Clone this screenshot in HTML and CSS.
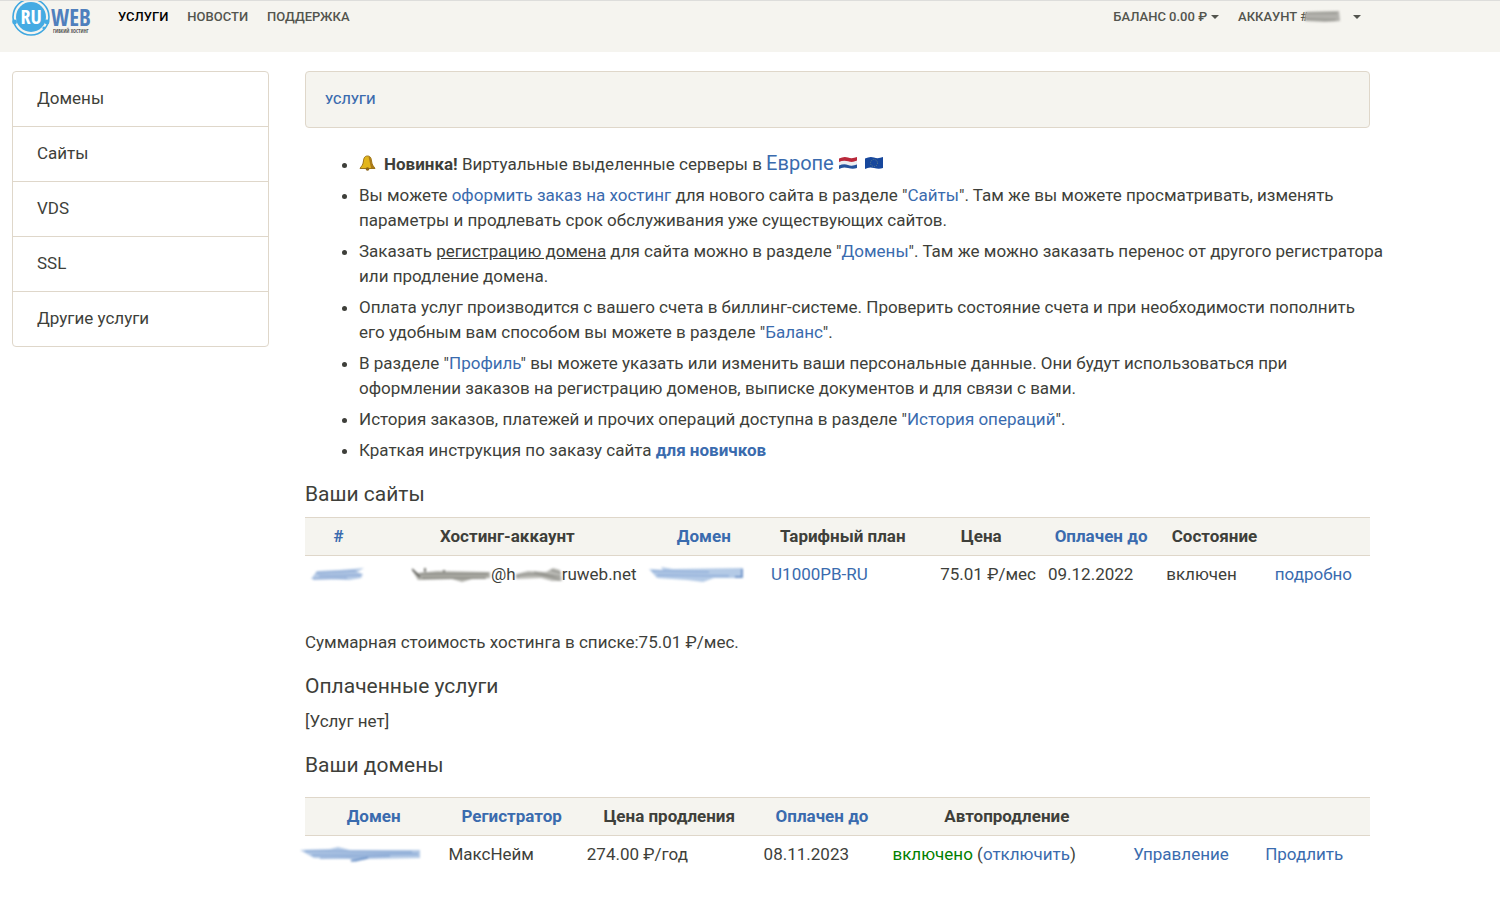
FILE: index.html
```html
<!DOCTYPE html>
<html lang="ru">
<head>
<meta charset="utf-8">
<title>RuWeb — Услуги</title>
<link rel="stylesheet" href="styles.css">
</head>
<body>
<header class="topbar">
  <div class="topbar-inner">
    <a class="logo" href="#" aria-label="RuWeb">
      <svg width="80" height="38" viewBox="0 0 80 38">
        <circle cx="19" cy="16" r="18" fill="none" stroke="#3fa7e0" stroke-width="1.6"/>
        <circle cx="19" cy="16" r="15" fill="#45abe3"/>
        <circle cx="2.6" cy="21" r="2.4" fill="#45abe3"/>
        <circle cx="35" cy="21" r="2.4" fill="#45abe3"/>
        <circle cx="32" cy="27" r="1.6" fill="#45abe3"/>
        <text x="19" y="23" text-anchor="middle" class="logo-ru">RU</text>
        <text x="39" y="25" class="logo-web">WEB</text>
        <text x="41" y="32" class="logo-sub">ГИБКИЙ ХОСТИНГ</text>
      </svg>
    </a>
    <nav class="nav">
      <a class="nav-link active" href="#">УСЛУГИ</a>
      <a class="nav-link" href="#">НОВОСТИ</a>
      <a class="nav-link" href="#">ПОДДЕРЖКА</a>
    </nav>
    <div class="nav nav-right">
      <button class="nav-link" type="button">БАЛАНС 0.00 ₽<span class="caret"></span></button>
      <button class="nav-link" type="button">АККАУНТ #<svg class="smear-account" width="36" height="14" viewBox="0 0 36 14"><path d="M0 2L34 1L35 11L20 12L0 11Z" fill="#b2b1ac"/><path d="M2 3H32M1 9L31 10" stroke="#969690" stroke-width="1.5" fill="none"/></svg><span class="caret caret-far"></span></button>
    </div>
  </div>
</header>

<div class="page">
  <nav class="side">
    <a href="#">Домены</a>
    <a href="#">Сайты</a>
    <a href="#">VDS</a>
    <a href="#">SSL</a>
    <a href="#">Другие услуги</a>
  </nav>

  <main class="main">
    <div class="crumbs"><a href="#">УСЛУГИ</a></div>

    <ul class="tips">
      <li><svg class="bell" width="17" height="16" viewBox="0 0 17 16"><path d="M8.5 1C5 1 4.700 4 4.300 7C4 10 2.500 11 1 13.500H16C14.500 11 13 10 12.700 7C12.300 4 12 1 8.500 1Z" fill="#e2b51b" stroke="#9a741a"/><path d="M9.500 1.500C12 2 12 5 12.500 8L15.500 13H12Z" fill="#a9791a"/><circle cx="8.500" cy="14" r="1.800" fill="#8c6518"/></svg><b>Новинка!</b> Виртуальные выделенные серверы в <a class="big" href="#">Европе</a><svg class="flags" width="46" height="14" viewBox="0 0 46 14"><path d="M1 2.500Q6 0 10 1.500T19 1V5Q15 6.500 10 5.500T1 6.500Z" fill="#b9283a"/><path d="M1 6Q6 4 10 5.500T19 4.500V9Q15 10.500 10 9T1 10Z" fill="#eceef1"/><path d="M1 9.500Q6 7.500 10 9T19 8.500V12Q15 13.500 10 12T1 13Z" fill="#24539c"/><path d="M27 2.500Q32 0 36 1.500T45 1V12Q41 13.500 36 12T27 13Z" fill="#17479c"/><circle cx="36" cy="7" r="3.500" fill="none" stroke="#6f8a80" stroke-width="0.800" stroke-dasharray="1 1.200"/></svg></li>
      <li>Вы можете <a href="#">оформить заказ на хостинг</a> для нового сайта в разделе "<a href="#">Сайты</a>". Там же вы можете просматривать, изменять<br>параметры и продлевать срок обслуживания уже существующих сайтов.</li>
      <li>Заказать <a class="plain" href="#">регистрацию домена</a> для сайта можно в разделе "<a href="#">Домены</a>". Там же можно заказать перенос от другого регистратора<br>или продление домена.</li>
      <li>Оплата услуг производится с вашего счета в биллинг-системе. Проверить состояние счета и при необходимости пополнить<br>его удобным вам способом вы можете в разделе "<a href="#">Баланс</a>".</li>
      <li>В разделе "<a href="#">Профиль</a>" вы можете указать или изменить ваши персональные данные. Они будут использоваться при<br>оформлении заказов на регистрацию доменов, выписке документов и для связи с вами.</li>
      <li>История заказов, платежей и прочих операций доступна в разделе "<a href="#">История операций</a>".</li>
      <li>Краткая инструкция по заказу сайта <a href="#"><b>для новичков</b></a></li>
    </ul>

    <h2>Ваши сайты</h2>
    <table class="grid sites">
      <colgroup><col class="s1"><col class="s2"><col class="s3"><col class="s4"><col class="s5"><col class="s6"><col class="s7"><col></colgroup>
      <thead><tr>
        <th><a href="#">#</a></th><th>Хостинг-аккаунт</th><th><a href="#">Домен</a></th><th>Тарифный план</th><th>Цена</th><th><a href="#">Оплачен до</a></th><th>Состояние</th><th></th>
      </tr></thead>
      <tbody><tr>
        <td><svg class="smear" width="54" height="14" viewBox="0 0 54 14"><path d="M0 11L6 3L28 2L53 0L46 4L52 6L50 10L38 12L20 11Z" fill="#b4c9e5"/><path d="M5 5L45 3M8 8L50 7M2 11L36 10" stroke="#8fabd6" stroke-width="1.500" fill="none"/></svg></td>
        <td class="num"><svg class="smear" width="79" height="14" viewBox="0 0 79 14"><path d="M0 2L6 5L25 3L78 4V10L60 11L50 14L40 11L6 12Z" fill="#b0b0aa"/><path d="M8 6H76M10 10H74" stroke="#85857f" stroke-width="1.500" fill="none"/><path d="M0 1L8 9M13 0V4M32 2V4" stroke="#4b4b46" stroke-width="1.500" fill="none"/></svg>@h<svg class="smear" width="46" height="14" viewBox="0 0 46 14"><path d="M0 6L12 3L30 4L37 0L44 2L46 13L36 13L25 10L0 11Z" fill="#b9b9b4"/><path d="M0 8Q20 3 44 12M35 2L45 5M18 4L44 9" stroke="#888882" stroke-width="1.200" fill="none"/></svg>ruweb.net</td>
        <td><svg class="smear" width="96" height="16" viewBox="0 0 96 16"><path d="M0 3L14 4L12 1L24 3L94 2V12L65 12L54 16L38 14L8 12Z" fill="#b4cae6"/><path d="M3 5L60 6M8 9L80 10" stroke="#8fadd8" stroke-width="1.500" fill="none"/><path d="M86 11H93V3" stroke="#5f88c2" stroke-width="1.500" fill="none"/></svg></td>
        <td><a href="#">U1000PB-RU</a></td>
        <td class="num">75.01 ₽/мес</td>
        <td>09.12.2022</td>
        <td>включен</td>
        <td><a href="#">подробно</a></td>
      </tr></tbody>
    </table>
    <p class="total">Суммарная стоимость хостинга в списке:75.01 ₽/мес.</p>

    <h2>Оплаченные услуги</h2>
    <p>[Услуг нет]</p>

    <h2>Ваши домены</h2>
    <table class="grid domains">
      <colgroup><col class="d1"><col class="d2"><col class="d3"><col class="d4"><col class="d5"><col class="d6"><col></colgroup>
      <thead><tr>
        <th><a href="#">Домен</a></th><th><a href="#">Регистратор</a></th><th>Цена продления</th><th><a href="#">Оплачен до</a></th><th>Автопродление</th><th></th><th></th>
      </tr></thead>
      <tbody><tr>
        <td><svg class="smear smear-wide" width="122" height="16" viewBox="0 0 122 16"><path d="M0 4L30 3L38 1L50 4L120 4V12L66 13L55 16L50 13L14 12Z" fill="#b2c8e5"/><path d="M5 5L112 6M12 9L118 8M20 12L90 10" stroke="#8aa9d5" stroke-width="1.500" fill="none"/><path d="M51 15L68 12" stroke="#5f88c2" stroke-width="1.500"/></svg></td>
        <td>МаксНейм</td>
        <td>274.00 ₽/год</td>
        <td>08.11.2023</td>
        <td><span class="on">включено</span> (<a href="#">отключить</a>)</td>
        <td><a href="#">Управление</a></td>
        <td><a href="#">Продлить</a></td>
      </tr></tbody>
    </table>
  </main>
</div>
</body>
</html>
```
FILE: styles.css
```css
* { box-sizing: border-box; }
body {
  margin: 0;
  background: #fff;
  color: #3e3f3a;
  font: 400 17px/25px Roboto, "Liberation Sans", sans-serif;
}
a { color: #3a6bae; text-decoration: none; }
p { margin: 0; }
b { font-weight: 700; }

.topbar {
  height: 52px;
  background: #f5f4ef;
  border-top: 1px solid #dddddb;
}
.topbar-inner {
  display: flex;
  align-items: flex-start;
  max-width: 1372px;
  padding: 0 11px 0 12px;
}
.logo svg { display: block; }
.logo text { font-family: "Liberation Sans Narrow", "Open Sans Condensed", Roboto, sans-serif; font-weight: 700; }
.logo-ru { font-size: 20px; fill: #fff; }
.logo-web { font-size: 23px; fill: #4f7fbd; }
.logo-sub { font-size: 5px; fill: #555; }

.nav { display: flex; gap: 19px; padding: 6px 0 0 26px; }
.nav-right { margin-left: auto; }
.nav-link {
  display: flex;
  align-items: center;
  padding: 0;
  border: 0;
  background: none;
  color: #53544e;
  font: 500 13px/20px Roboto, sans-serif;
}
.nav-link.active { color: #000; }
.caret {
  margin-left: 4px;
  border: 4px solid transparent;
  border-top-color: currentColor;
  border-bottom: 0;
}
.caret-far { margin-left: 12px; }

.page {
  display: grid;
  grid-template-columns: 257px minmax(0, 1fr);
  gap: 36px;
  align-items: start;
  max-width: 1370px;
  padding: 19px 0 40px 12px;
}
.side {
  border: 1px solid #dfd7ca;
  border-radius: 4px;
}
.side a {
  display: block;
  padding: 14px 24px 15px;
  color: #3e3f3a;
}
.side a + a { border-top: 1px solid #dfd7ca; }

.crumbs {
  padding: 15px 19px;
  border: 1px solid #dfd7ca;
  border-radius: 4px;
  background: #f5f4ef;
  font-size: 13px;
  font-weight: 500;
}
.tips {
  margin: 23px -24px 0 0;
  padding-left: 54px;
}
.tips li { margin-bottom: 6px; }
.tips .big { font-size: 20px; }
.tips .plain { color: inherit; text-decoration: underline; }
.bell { margin-right: 8px; vertical-align: -1px; }
.flags { margin-left: 4px; }

h2 {
  margin: 18px 0 10px;
  font-size: 21px;
  font-weight: 400;
  line-height: 26px;
}
.grid {
  width: 100%;
  table-layout: fixed;
  border-collapse: collapse;
}
.grid th, .grid td { padding: 6px; white-space: nowrap; }
.grid th {
  background: #f5f4ef;
  border-top: 1px solid #dfd7ca;
  border-bottom: 1px solid #dfd7ca;
  font-weight: 700;
  text-align: center;
}
.grid td { text-align: left; }
.grid td.num { text-align: right; }
.s1 { width: 6.3%; }
.s2 { width: 25.4%; }
.s3 { width: 11.5%; }
.s4 { width: 14.6%; }
.s5 { width: 11.4%; }
.s6 { width: 11.1%; }
.s7 { width: 10.2%; }
.d1 { width: 12.9%; }
.d2 { width: 13%; }
.d3 { width: 16.6%; }
.d4 { width: 12.1%; }
.d5 { width: 22.6%; }
.d6 { width: 12.4%; }
.smear { vertical-align: -2px; filter: blur(1px); }
.smear-account { margin-left: -3px; filter: blur(1px); }
.smear-wide { margin-left: -11px; }
.total { margin-top: 37px; }
.domains { margin-top: 19px; }
.on { color: #008000; }
```
